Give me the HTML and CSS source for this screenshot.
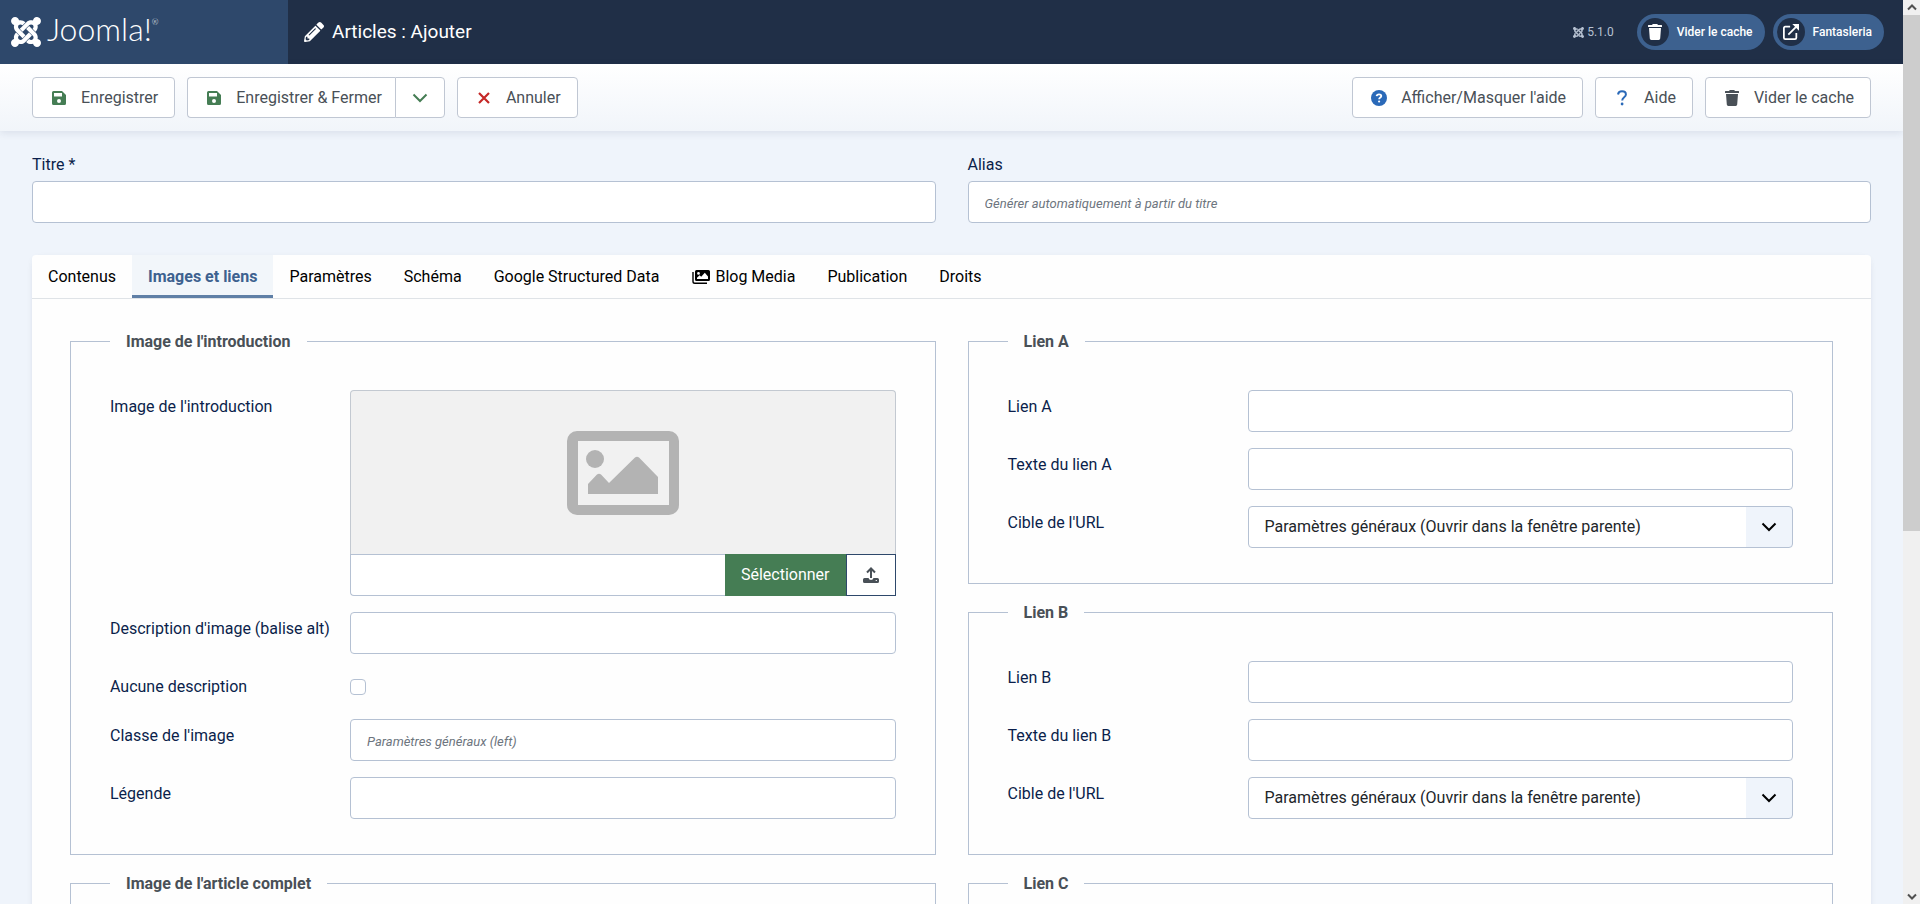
FILE: index.html
```html
<!DOCTYPE html>
<html lang="fr">
<head>
<meta charset="utf-8">
<title>Articles : Ajouter</title>
<link rel="stylesheet" href="styles.css">
</head>
<body>
<svg class="sprite" aria-hidden="true">
  <symbol id="joomla" viewBox="0 32 448 448"><path d="M.6 92.1C.6 58.8 27.4 32 60.4 32c30 0 54.5 21.9 59.2 50.2 32.6-7.6 67.1.6 96.5 30l-44.3 44.3c-20.5-20.5-42.6-16.3-55.4-3.5-14.3 14.3-14.3 37.9 0 52.2l99.5 99.5-44 44.3c-87.7-87.2-49.7-49.7-99.8-99.7-26.8-26.5-35-64.8-24.8-98.9C20.4 144.6.6 120.7.6 92.1zm129.5 116.4l44.3 44.3c10-10 89.7-89.7 99.7-99.8 14.3-14.3 37.6-14.3 51.9 0 12.8 12.8 17 35-3.5 55.4l44 44.3c31.2-31.2 38.5-67.6 28.9-101.2 29.2-4.1 51.9-29.2 51.9-59.5 0-33.2-26.8-60.1-59.8-60.1-30.3 0-55.4 22.5-59.5 51.6-33.8-9.9-71.7-1.5-98.3 25.1-18.3 19.1-71.1 71.5-99.6 99.9zm266.3 152.2c8.2-32.7-.9-68.5-26.3-93.9-11.8-12.2 5 4.7-99.5-99.7l-44.3 44.3 99.7 99.7c14.3 14.3 14.3 37.6 0 51.9-12.8 12.8-35 17-55.4-3.5l-44 44.3c27.6 30.2 68 38.8 102.7 28 5.5 27.4 29.7 48.1 58.9 48.1 33 0 59.8-26.8 59.8-60.1 0-30.2-22.5-55-51.6-59.1zm-84.3-53.1l-44-44.3c-87 86.4-50.4 50.4-99.7 99.8-14.3 14.3-37.6 14.3-51.9 0-13.1-13.4-16.9-35.3 3.2-55.4l-44-44.3c-30.2 30.2-38 65.2-29.5 98.3-26.7 6-46.2 29.9-46.2 58.2C0 453.2 26.8 480 59.8 480c28.6 0 52.5-19.8 58.6-46.7 32.7 8.2 68.5-.6 94.2-26 32.1-32 12.2-12.4 99.5-99.7z"/></symbol>
  <symbol id="pencil" viewBox="0 0 512 512"><path d="M497.9 142.1l-46.1 46.1c-4.7 4.7-12.3 4.7-17 0l-111-111c-4.7-4.7-4.7-12.3 0-17l46.1-46.1c18.7-18.7 49.1-18.7 67.9 0l60.1 60.1c18.8 18.7 18.8 49.1 0 67.9zM284.2 99.8L21.6 362.4.4 483.9c-2.9 16.4 11.4 30.6 27.8 27.8l121.5-21.3 262.6-262.6c4.7-4.7 4.7-12.3 0-17l-111-111c-4.8-4.7-12.4-4.7-17.1 0zM124.1 339.9c-5.5-5.5-5.5-14.3 0-19.8l154-154c5.5-5.5 14.3-5.5 19.8 0s5.5 14.3 0 19.8l-154 154c-5.5 5.5-14.3 5.5-19.8 0zM88 424h48v36.3l-64.5 11.3-31.1-31.1L51.7 376H88v48z"/></symbol>
  <symbol id="save" viewBox="0 0 14 14"><path fill-rule="evenodd" d="M1.5 0H10l4 4v8.5a1.5 1.5 0 0 1-1.5 1.5h-11A1.5 1.5 0 0 1 0 12.500V1.500A1.500 1.500 0 0 1 1.500 0zM2 2v3.500h8V2zM7 8a2 2 0 1 0 0 4a2 2 0 0 0 0-4z"/></symbol>
  <symbol id="trash" viewBox="0 0 14 16"><path d="M.5 1H4l.8-1h4.400L10 1h3.500a.5.5 0 0 1 .5.5V3H0V1.500A.5.500 0 0 1 .5 1zM1 4h12l-.8 10.600A1.500 1.500 0 0 1 10.700 16H3.300a1.500 1.500 0 0 1-1.500-1.400z"/></symbol>
  <symbol id="external" viewBox="0 0 18 18"><path fill="none" stroke="currentColor" stroke-width="2" d="M8 3H2.500A1.500 1.500 0 0 0 1 4.500v11A1.500 1.500 0 0 0 2.500 17h11a1.500 1.500 0 0 0 1.500-1.500V10M6 12L15 3"/><path d="M10.500 0H18v7.500z"/></symbol>
  <symbol id="images" viewBox="0 0 18 16"><path fill-rule="evenodd" d="M4.500 1h12A1.500 1.500 0 0 1 18 2.500v8a1.500 1.500 0 0 1-1.500 1.500h-12A1.500 1.500 0 0 1 3 10.500v-8A1.500 1.500 0 0 1 4.500 1zM5 10h11V7.500l-3.200-3.700-3.600 4-1.600-1.500L5 8.700zM6.500 3a1.400 1.400 0 1 0 0 2.800a1.400 1.400 0 0 0 0-2.800z"/><path fill="none" stroke="currentColor" stroke-width="1.400" d="M1 3v9.500A1.800 1.800 0 0 0 2.800 14.300H15"/></symbol>
  <symbol id="chevron" viewBox="0 0 16 10"><path fill="none" stroke="currentColor" stroke-width="2" d="M1.500 1.500L8 8l6.500-6.500"/></symbol>
  <symbol id="cross" viewBox="0 0 12 12"><path fill="none" stroke="currentColor" stroke-width="2.200" d="M1 1l10 10M11 1L1 11"/></symbol>
  <symbol id="question" viewBox="0 0 10 16"><path fill="none" stroke="currentColor" stroke-width="2" d="M1 4.500C1.300 2.300 2.800 1.200 5 1.200c2.300 0 3.900 1.200 3.900 3.200 0 2.900-3.700 2.700-3.700 6.100"/><circle cx="5.100" cy="14" r="1.400"/></symbol>
  <symbol id="help" viewBox="0 0 16 16"><circle cx="8" cy="8" r="8"/><path fill="none" stroke="#fff" stroke-width="1.800" d="M5.600 6.200C5.800 4.900 6.700 4.300 8 4.300c1.400 0 2.300.7 2.300 1.800 0 1.500-2.200 1.400-2.200 3.200"/><circle cx="8.100" cy="11.500" r="1.100" fill="#fff"/></symbol>
  <symbol id="upload" viewBox="0 0 16 16"><path fill="none" stroke="currentColor" stroke-width="2" d="M8 11V1.800M4 5.500L8 1.500l4 4"/><path fill-rule="evenodd" d="M1.500 11H5.500a2.600 2.600 0 0 0 5 0H14.500A1.500 1.500 0 0 1 16 12.500v2a1.500 1.500 0 0 1-1.500 1.500h-13A1.500 1.500 0 0 1 0 14.500v-2A1.500 1.500 0 0 1 1.500 11zM12.700 13v1h1.200v-1z"/></symbol>
  <symbol id="picture" viewBox="0 0 112 84"><path fill-rule="evenodd" d="M10 0h92a10 10 0 0 1 10 10v64a10 10 0 0 1-10 10H10A10 10 0 0 1 0 74V10A10 10 0 0 1 10 0zM11 10v64h91V10z"/><circle cx="28" cy="28" r="9"/><path d="M21 63V53l9-9.500q2-1.500 4 0L42 52l26-25.500q2-1.500 4 0L91 46v17z"/></symbol>
</svg>

<div class="window">
  <div class="page">
    <header class="header">
      <a class="brand" href="#"><svg class="brand-mark"><use href="#joomla"/></svg><span class="brand-name">Joomla!<sup>®</sup></span></a>
      <h1 class="page-title"><svg class="icon-20"><use href="#pencil"/></svg>Articles : Ajouter</h1>
      <div class="header-items">
        <span class="version"><svg class="icon-11"><use href="#joomla"/></svg>5.1.0</span>
        <a class="pill" href="#"><span class="pill-icon"><svg class="pill-trash"><use href="#trash"/></svg></span>Vider le cache</a>
        <a class="pill" href="#"><span class="pill-icon"><svg class="icon-16"><use href="#external"/></svg></span>Fantasleria</a>
      </div>
    </header>

    <div class="toolbar">
      <button class="btn green" type="button"><span class="btn-icon"><svg class="icon-14"><use href="#save"/></svg></span>Enregistrer</button>
      <div class="btn-group">
        <button class="btn green" type="button"><span class="btn-icon"><svg class="icon-14"><use href="#save"/></svg></span>Enregistrer &amp; Fermer</button>
        <button class="btn btn-toggle green" type="button" aria-label="Autres actions"><svg class="chevron"><use href="#chevron"/></svg></button>
      </div>
      <button class="btn red" type="button"><span class="btn-icon"><svg class="icon-12"><use href="#cross"/></svg></span>Annuler</button>
      <div class="toolbar-end">
        <button class="btn blue" type="button"><span class="btn-icon"><svg class="icon-16"><use href="#help"/></svg></span>Afficher/Masquer l'aide</button>
        <button class="btn blue" type="button"><span class="btn-icon"><svg class="icon-question"><use href="#question"/></svg></span>Aide</button>
        <button class="btn" type="button"><span class="btn-icon"><svg class="icon-trash"><use href="#trash"/></svg></span>Vider le cache</button>
      </div>
    </div>

    <main class="main">
      <div class="columns titles">
        <div class="stacked"><label for="title">Titre *</label><input class="control" id="title" type="text"></div>
        <div class="stacked"><label for="alias">Alias</label><input class="control" id="alias" type="text" placeholder="Générer automatiquement à partir du titre"></div>
      </div>

      <section class="card">
        <div class="tabs" role="tablist">
          <button class="tab" role="tab" type="button">Contenus</button>
          <button class="tab tab-active" role="tab" type="button" aria-selected="true">Images et liens</button>
          <button class="tab" role="tab" type="button">Paramètres</button>
          <button class="tab" role="tab" type="button">Schéma</button>
          <button class="tab" role="tab" type="button">Google Structured Data</button>
          <button class="tab" role="tab" type="button"><svg class="icon-images"><use href="#images"/></svg>Blog Media</button>
          <button class="tab" role="tab" type="button">Publication</button>
          <button class="tab" role="tab" type="button">Droits</button>
        </div>

        <div class="columns panel">
          <div class="sets">
            <fieldset class="set">
              <legend>Image de l'introduction</legend>
              <div class="rows">
                <div class="row">
                  <label for="intro">Image de l'introduction</label>
                  <div class="media">
                    <div class="preview"><svg class="picture"><use href="#picture"/></svg></div>
                    <div class="media-bar">
                      <input class="control" id="intro" type="text">
                      <button class="select-btn" type="button">Sélectionner</button>
                      <button class="upload-btn" type="button" aria-label="Téléverser"><svg class="icon-16"><use href="#upload"/></svg></button>
                    </div>
                  </div>
                </div>
                <div class="row"><label for="alt">Description d'image (balise alt)</label><input class="control" id="alt" type="text"></div>
                <div class="row row-check"><label for="noalt">Aucune description</label><input class="check" id="noalt" type="checkbox"></div>
                <div class="row"><label for="class">Classe de l'image</label><input class="control" id="class" type="text" placeholder="Paramètres généraux (left)"></div>
                <div class="row"><label for="caption">Légende</label><input class="control" id="caption" type="text"></div>
              </div>
            </fieldset>
            <fieldset class="set">
              <legend>Image de l'article complet</legend>
              <div class="rows"></div>
            </fieldset>
          </div>

          <div class="sets">
            <fieldset class="set">
              <legend>Lien A</legend>
              <div class="rows">
                <div class="row"><label for="urla">Lien A</label><input class="control" id="urla" type="text"></div>
                <div class="row"><label for="texta">Texte du lien A</label><input class="control" id="texta" type="text"></div>
                <div class="row"><label for="targeta">Cible de l'URL</label>
                  <div class="select"><select class="control" id="targeta"><option>Paramètres généraux (Ouvrir dans la fenêtre parente)</option></select><svg class="chevron"><use href="#chevron"/></svg></div></div>
              </div>
            </fieldset>
            <fieldset class="set">
              <legend>Lien B</legend>
              <div class="rows">
                <div class="row"><label for="urlb">Lien B</label><input class="control" id="urlb" type="text"></div>
                <div class="row"><label for="textb">Texte du lien B</label><input class="control" id="textb" type="text"></div>
                <div class="row"><label for="targetb">Cible de l'URL</label>
                  <div class="select"><select class="control" id="targetb"><option>Paramètres généraux (Ouvrir dans la fenêtre parente)</option></select><svg class="chevron"><use href="#chevron"/></svg></div></div>
              </div>
            </fieldset>
            <fieldset class="set">
              <legend>Lien C</legend>
              <div class="rows"></div>
            </fieldset>
          </div>
        </div>
      </section>
    </main>
  </div>

  <div class="scrollbar" aria-hidden="true">
    <svg class="arrow" viewBox="0 0 10 8"><path d="M1 6l4-4 4 4"/></svg>
    <div class="track"><div class="thumb"></div></div>
    <svg class="arrow" viewBox="0 0 10 8"><path d="M1 2l4 4 4-4"/></svg>
  </div>
</div>
</body>
</html>
```
FILE: styles.css
```css
* {
  box-sizing: border-box;
}

body {
  margin: 0;
  background: #eff4fb;
  color: #22262a;
  font: 16px/24px Roboto, "Liberation Sans", sans-serif;
}

button,
input,
select {
  font: inherit;
}

a {
  color: inherit;
  text-decoration: none;
}

svg {
  display: block;
  flex: none;
  fill: currentColor;
}

.sprite {
  position: absolute;
  width: 0;
  height: 0;
}

.window {
  display: grid;
  grid-template-columns: minmax(0, 1fr) 17px;
  height: 100vh;
  overflow: hidden;
}

.page {
  height: 100vh;
  overflow: hidden;
}

/* Header */
.header {
  display: flex;
  align-items: center;
  height: 64px;
  background: #202f47;
  color: #fff;
}

.brand {
  display: flex;
  align-items: center;
  gap: 6px;
  width: 288px;
  height: 64px;
  padding: 0 11px;
  background: #2e486b;
}

.brand-mark {
  width: 30px;
  height: 30px;
}

.brand-name {
  padding-bottom: 6px;
  font: 300 32px/32px Lato, sans-serif;
}

.brand-name sup {
  font-size: 8px;
  line-height: 0;
  vertical-align: 16px;
}

.page-title {
  display: flex;
  align-items: center;
  gap: 8px;
  margin: 0;
  padding-left: 16px;
  font-size: 19px;
  font-weight: 400;
}

.header-items {
  display: flex;
  align-items: center;
  gap: 8px;
  margin-left: auto;
  padding-right: 19px;
}

.version {
  display: flex;
  align-items: center;
  gap: 3px;
  margin-right: 15px;
  color: #b7c2d2;
  font-size: 12px;
}

.pill {
  display: flex;
  align-items: center;
  gap: 8px;
  height: 36px;
  padding: 0 12px 0 4px;
  border-radius: 18px;
  background: #3d618f;
  font-size: 12px;
  font-weight: 500;
}

.pill-icon {
  display: grid;
  place-items: center;
  width: 28px;
  height: 28px;
  border-radius: 50%;
  background: #202f47;
}

.icon-11 { width: 11px; height: 11px; }
.icon-12 { width: 12px; height: 12px; }
.icon-14 { width: 14px; height: 14px; }
.icon-16 { width: 16px; height: 16px; }
.icon-20 { width: 20px; height: 20px; }
.icon-question { width: 10px; height: 16px; }
.icon-images { width: 20px; height: 16px; }
.icon-trash,
.pill-trash { width: 14px; height: 16px; }
.chevron { width: 16px; height: 10px; }

/* Toolbar */
.toolbar {
  display: flex;
  align-items: center;
  gap: 12px;
  height: 67px;
  padding: 0 32px;
  background: linear-gradient(#fff, #f1f5fa);
  box-shadow: 0 2px 8px #1a2b4d1a;
}

.toolbar-end {
  display: flex;
  gap: 12px;
  margin-left: auto;
}

.btn {
  display: flex;
  align-items: center;
  gap: 12px;
  height: 41px;
  padding: 0 16px;
  border: 1px solid #c0c7d3;
  border-radius: 4px;
  background: #fff;
  color: #495057;
}

.btn-icon {
  display: grid;
  place-items: center;
  width: 20px;
}

.btn-group {
  display: flex;
}

.btn-group .btn:first-child {
  padding-right: 13px;
  border-right: 0;
  border-radius: 4px 0 0 4px;
}

.btn-group .btn-toggle {
  border-radius: 0 4px 4px 0;
}

.green svg { color: #457d54; }
.red svg { color: #c52827; }
.blue svg { color: #2a69b8; }

/* Forms */
.main {
  padding: 22px 32px 0;
}

.columns {
  display: grid;
  grid-template-columns: repeat(2, minmax(0, 1fr));
  gap: 32px;
}

label {
  color: #0b1f4b;
}

.stacked {
  display: grid;
  gap: 4px;
}

.control {
  width: 100%;
  min-width: 0;
  height: 42px;
  padding: 0 16px;
  border: 1px solid #b5c1d3;
  border-radius: 4px;
  background: #fff;
  color: #22262a;
}

.control::placeholder {
  color: #6d757e;
  font-size: 13px;
  font-style: italic;
}

.card {
  margin-top: 32px;
  background: #fefefe;
  border-radius: 4px 4px 0 0;
  box-shadow: 0 2px 10px -8px #1a2b4d66, 0 2px 8px -2px #1a2b4d10;
}

.tabs {
  display: flex;
  border-bottom: 1px solid #dfe3e7;
}

.tab {
  display: flex;
  align-items: center;
  gap: 4px;
  height: 43px;
  padding: 3px 16px 0;
  border: 0;
  border-bottom: 3px solid transparent;
  background: none;
  color: #000;
}

.tab-active {
  border-color: #5f7fa6;
  background: #f2f6fa;
  color: #3d618f;
  font-weight: 700;
}

.panel {
  padding: 29px 38px 38px;
}

.sets {
  display: grid;
  align-content: start;
  gap: 15px;
}

.set {
  min-width: 0;
  margin: 0;
  padding: 0 39px 35px;
  border: 1px solid #b5c1d3;
}

.set legend {
  padding: 2px 16px 0;
  color: #495057;
  font-weight: 700;
}

.rows {
  display: grid;
  gap: 16px;
  padding-top: 36px;
}

.row {
  display: grid;
  grid-template-columns: 240px minmax(0, 1fr);
  align-items: start;
}

.row label {
  padding-top: 5px;
}

.row-check {
  height: 33px;
}

.check {
  appearance: none;
  width: 16px;
  height: 16px;
  margin: 9px 0 0;
  border: 1px solid #b5c1d3;
  border-radius: 4px;
  background: #fff;
}

.select {
  display: grid;
  grid-template-columns: minmax(0, 1fr) 48px;
  align-items: center;
}

.select select {
  grid-area: 1 / 1 / 2 / 3;
  appearance: none;
  background: linear-gradient(90deg, #fff calc(100% - 46px), #eff4fb calc(100% - 46px));
}

.select .chevron {
  grid-area: 1 / 2;
  justify-self: center;
  color: #000;
  pointer-events: none;
}

.preview {
  display: grid;
  place-items: center;
  height: 164px;
  border: 1px solid #c3c9d1;
  border-bottom: 0;
  border-radius: 4px 4px 0 0;
  background: #f1f1f1;
}

.picture {
  width: 112px;
  height: 84px;
  color: #b3b3b3;
}

.media-bar {
  display: flex;
}

.media-bar .control {
  flex: 1;
  width: auto;
  border-right: 0;
  border-radius: 0 0 0 4px;
}

.select-btn {
  padding: 0 16px;
  border: 0;
  background: #457d54;
  color: #fff;
}

.upload-btn {
  display: grid;
  place-items: center;
  width: 50px;
  padding: 0;
  border: 1px solid #2e486b;
  background: #fff;
  color: #495057;
}

/* Scrollbar */
.scrollbar {
  display: flex;
  flex-direction: column;
  align-items: center;
  height: 100vh;
  background: #f0f0f0;
}

.arrow {
  width: 10px;
  height: 15px;
  fill: none;
  stroke: #505050;
  stroke-width: 2;
}

.track {
  flex: 1;
  width: 100%;
}

.thumb {
  height: 59%;
  background: #cdcdcd;
}
```
